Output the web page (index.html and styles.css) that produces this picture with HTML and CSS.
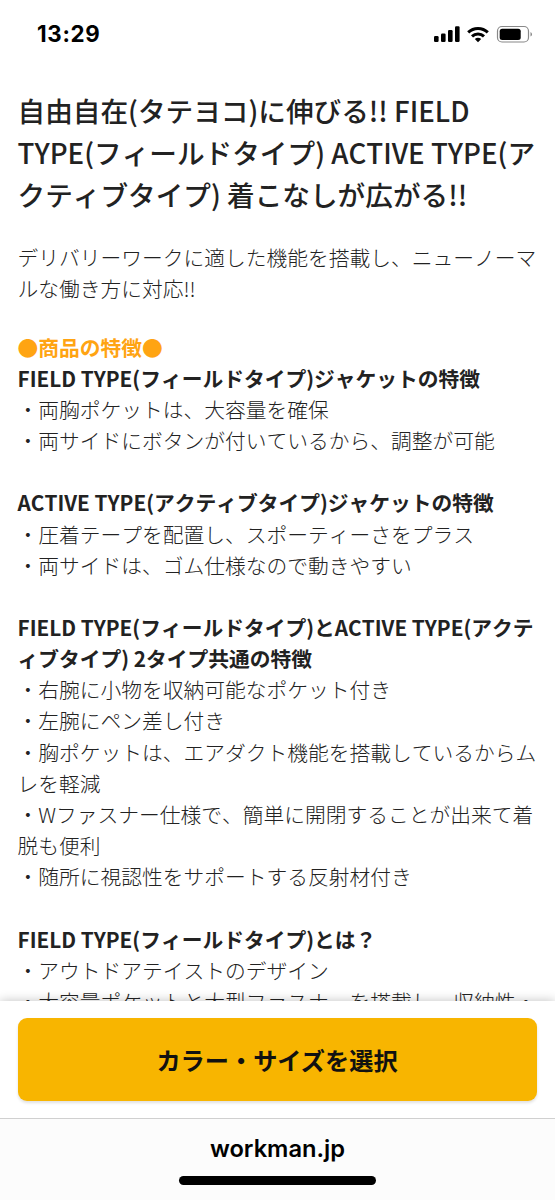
FILE: index.html
```
<!DOCTYPE html>
<html lang="ja">
<head>
    <meta charset="UTF-8">
    <meta name="viewport" content="width=device-width, initial-scale=1.0">
    <title>workman.jp</title>
    <link rel="stylesheet" href="styles.css">
</head>
<body>
    <div class="screen">
        <header class="status-bar">
            <span class="time">13:29</span>
            <svg class="status-icons" width="100" height="20" viewBox="0 0 100 20">
                <!-- signal -->
                <rect x="1" y="12" width="4.6" height="6" rx="1.2"/>
                <rect x="8" y="9.5" width="4.6" height="8.5" rx="1.2"/>
                <rect x="15" y="6" width="4.6" height="12" rx="1.2"/>
                <rect x="22" y="2.3" width="4.6" height="15.7" rx="1.2"/>
                <!-- wifi -->
                <g fill="none" stroke="#000" stroke-width="3">
                    <path d="M35.2 8.3a14.2 14.2 0 0 1 19.6 0"/>
                    <path d="M39 12.4a8.7 8.7 0 0 1 12 0"/>
                </g>
                <path d="M41.8 15q3.2-2.5 6.4 0L45 18.2z"/>
                <!-- battery -->
                <rect x="64.5" y="2.5" width="31" height="15.5" rx="4.5" fill="none" stroke="#888" stroke-width="1.2"/>
                <rect x="66.7" y="4.7" width="21" height="11.2" rx="2.5"/>
                <path d="M97.5 8v4.6q1.5-.7 1.5-2.3t-1.5-2.3z" fill="#888"/>
            </svg>
        </header>

        <main class="content">
            <h1>自由自在(タテヨコ)に伸びる!! FIELD<br>TYPE(フィールドタイプ) ACTIVE TYPE(ア<br>クティブタイプ) 着こなしが広がる!!</h1>
            <div class="description">
                <p>デリバリーワークに適した機能を搭載し、ニューノーマ<br>ルな働き方に対応!!</p>
                <p class="features"><span class="label">●商品の特徴●</span><br>
                <b>FIELD TYPE(フィールドタイプ)ジャケットの特徴</b><br>
                ・両胸ポケットは、大容量を確保<br>
                ・両サイドにボタンが付いているから、調整が可能<br>
                <br>
                <b>ACTIVE TYPE(アクティブタイプ)ジャケットの特徴</b><br>
                ・圧着テープを配置し、スポーティーさをプラス<br>
                ・両サイドは、ゴム仕様なので動きやすい<br>
                <br>
                <b>FIELD TYPE(フィールドタイプ)とACTIVE TYPE(アクテ<br>ィブタイプ) 2タイプ共通の特徴</b><br>
                ・右腕に小物を収納可能なポケット付き<br>
                ・左腕にペン差し付き<br>
                ・胸ポケットは、エアダクト機能を搭載しているからム<br>レを軽減<br>
                ・Wファスナー仕様で、簡単に開閉することが出来て着<br>脱も便利<br>
                ・随所に視認性をサポートする反射材付き<br>
                <br>
                <b>FIELD TYPE(フィールドタイプ)とは？</b><br>
                ・アウトドアテイストのデザイン<br>
                ・大容量ポケットと大型ファスナーを搭載し、収納性・</p>
            </div>
        </main>

        <div class="purchase">
            <button class="select-btn">カラー・サイズを選択</button>
        </div>

        <footer class="browser-bar">
            <div class="address">workman.jp</div>
            <div class="home-indicator"></div>
        </footer>
    </div>
</body>
</html>
```

FILE: styles.css
```
* {
    box-sizing: border-box;
}
body {
    margin: 0;
    background: #fff;
    color: #222;
    font-family: "Noto Sans CJK JP", sans-serif;
}
.screen {
    display: flex;
    flex-direction: column;
    height: 1200px;
    overflow: hidden;
}
.status-bar {
    display: flex;
    flex: none;
    justify-content: space-between;
    height: 70px;
    padding: 20px 22px 0 37px;
}
.time {
    color: #000;
    font: 700 22.3px/28px Inter, sans-serif;
    letter-spacing: 0.7px;
}
.status-icons {
    margin-top: 4px;
}
.content {
    flex: 1;
    min-height: 0;
    padding: 19px 17px 0 17.5px;
    overflow: hidden;
    white-space: nowrap;
    font-kerning: none;
}
h1 {
    margin: 0;
    font-size: 27.65px;
    font-weight: 500;
    line-height: 42px;
}
.description {
    margin-top: 26.6px;
    font-size: 20.75px;
    font-weight: 300;
    line-height: 31.15px;
}
.description p {
    margin: 0;
}
.description .features {
    margin-top: 27.7px;
}
b {
    font-weight: 700;
}
.label {
    color: #ffa412;
    font-weight: 700;
}
.purchase {
    flex: none;
    height: 117px;
    padding: 17px 18.5px 17px 17.5px;
    background: #fff;
    box-shadow: 0 0 10px rgba(0,0,0,0.25);
}
.select-btn {
    display: block;
    width: 100%;
    height: 83px;
    border: none;
    border-radius: 9px;
    background: #f8b500;
    box-shadow: 0 2px 3px rgba(0,0,0,0.12);
    color: #111;
    font: 700 24.2px "Noto Sans CJK JP", sans-serif;
}
.browser-bar {
    display: flex;
    flex: none;
    flex-direction: column;
    align-items: center;
    height: 82px;
    border-top: 1px solid #d0d0d0;
    background: #fcfcfc;
}
.address {
    margin-top: 14px;
    color: #000;
    font: 600 23.7px/32px Inter, sans-serif;
}
.home-indicator {
    width: 197px;
    height: 9px;
    margin-top: 11px;
    border-radius: 5px;
    background: #000;
}
```
